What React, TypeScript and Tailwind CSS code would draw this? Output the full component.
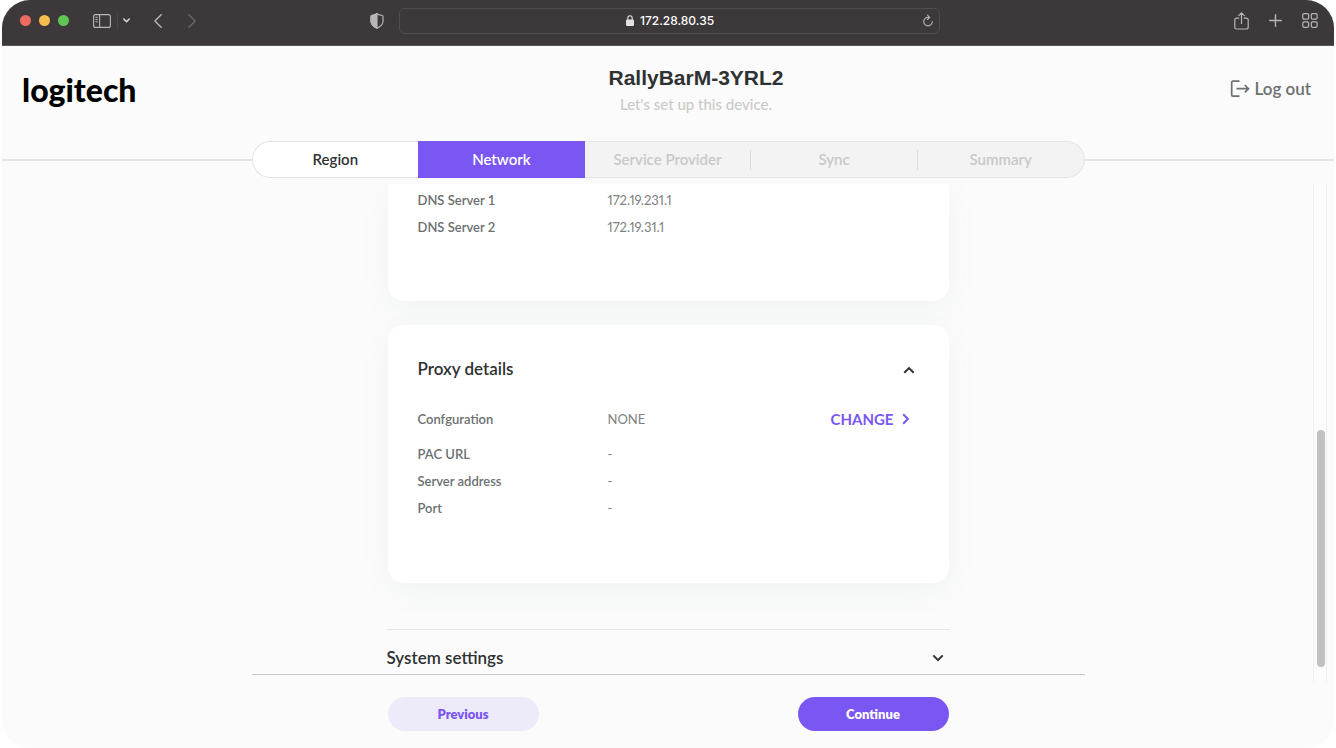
import { useState } from "react";

const steps = ["Region", "Network", "Service Provider", "Sync", "Summary"];
const currentStep = 1;

const dnsRows = [
  { label: "DNS Server 1", value: "172.19.231.1" },
  { label: "DNS Server 2", value: "172.19.31.1" },
];

const proxyRows = [
  { label: "PAC URL", value: "-" },
  { label: "Server address", value: "-" },
  { label: "Port", value: "-" },
];

type ChevronProps = { direction: "up" | "down" | "right"; className?: string };

function Chevron({ direction, className }: ChevronProps) {
  const paths = {
    up: "M1.3 9.8 6 5.1l4.7 4.7",
    down: "M1.3 3.4 6 8.1l4.7-4.7",
    right: "M3.2 1.3 7.9 6l-4.7 4.7",
  };
  return (
    <svg viewBox="0 0 12 12" width="12" height="12" fill="none" stroke="currentColor" strokeWidth="2" className={className} aria-hidden="true">
      <path d={paths[direction]} />
    </svg>
  );
}

function BrowserBar() {
  return (
    <div className="flex h-[46px] shrink-0 items-center border-b border-[#5c5859] bg-[#3d3839] pb-1 text-[#b9b6b7]">
      <div className="flex flex-1 items-center pl-[18px]">
        <div className="flex gap-2">
          <span className="size-[11px] rounded-full bg-[#ed6a5e]" />
          <span className="size-[11px] rounded-full bg-[#f4bf4f]" />
          <span className="size-[11px] rounded-full bg-[#61c554]" />
        </div>
        <button type="button" aria-label="Toggle sidebar" className="ml-6">
          <svg width="18" height="14" viewBox="0 0 18 14" fill="none" stroke="currentColor" strokeWidth="1.1" className="block">
            <rect x="0.6" y="0.6" width="16.8" height="12.8" rx="2" />
            <path d="M6.6 .6v12.8M2.4 3.3h2.3M2.4 5.5h2.3M2.4 7.7h2.3" />
          </svg>
        </button>
        <span className="ml-1.5 h-4 w-px bg-[#4b4647]" />
        <button type="button" aria-label="Tab groups" className="ml-[5px] text-[#dddbdc]">
          <svg width="7" height="5" viewBox="0 0 7 5" fill="none" stroke="currentColor" strokeWidth="1.5" strokeLinecap="round" strokeLinejoin="round" className="block">
            <path d="M.8 1 3.5 3.8 6.2 1" />
          </svg>
        </button>
        <button type="button" aria-label="Back" className="ml-6">
          <svg width="8" height="14" viewBox="0 0 8 14" fill="none" stroke="currentColor" strokeWidth="1.4" strokeLinecap="round" strokeLinejoin="round" className="block">
            <path d="M7.2.8.9 7l6.3 6.2" />
          </svg>
        </button>
        <button type="button" aria-label="Forward" className="ml-[26px] text-[#6a6667]">
          <svg width="8" height="14" viewBox="0 0 8 14" fill="none" stroke="currentColor" strokeWidth="1.4" strokeLinecap="round" strokeLinejoin="round" className="block">
            <path d="M.8.8 7.1 7 .8 13.2" />
          </svg>
        </button>
        <span className="flex-1" />
        <svg width="14" height="16" viewBox="0 0 14 16" fill="none" stroke="currentColor" strokeWidth="1.2" className="mr-[15px]" aria-hidden="true">
          <path d="M7 .8c1.6 1 3.4 1.5 5.2 1.7.5.1.8.4.8.9v4.8c0 3.2-2.4 5.4-6 7-3.6-1.6-6-3.8-6-7V3.4c0-.5.3-.8.8-.9C3.6 2.3 5.4 1.8 7 .8Z" />
          <path d="M7 .8v14.4c-3.6-1.6-6-3.8-6-7V3.4c0-.5.3-.8.8-.9C3.6 2.3 5.4 1.8 7 .8Z" fill="currentColor" />
        </svg>
      </div>
      <div className="flex h-[26px] w-[541px] items-center rounded-md border border-[#514d4e] px-1.5">
        <div className="flex flex-1 items-center justify-center gap-1.5 pl-3 text-[#e4e2e3]">
          <svg width="8" height="11" viewBox="0 0 8 11" aria-hidden="true">
            <rect y="4.6" width="8" height="6.4" rx="1.2" fill="currentColor" />
            <path d="M1.8 5V3a2.2 2.2 0 0 1 4.4 0v2" fill="none" stroke="currentColor" strokeWidth="1.1" />
          </svg>
          <span className="font-[Inter,sans-serif] text-xs leading-4 font-medium text-white">172.28.80.35</span>
        </div>
        <button type="button" aria-label="Reload">
          <svg width="10" height="13" viewBox="0 0 10 13" fill="none" stroke="currentColor" strokeWidth="1.1" strokeLinecap="round" strokeLinejoin="round" className="block">
            <path d="M9.3 7.6A4.3 4.3 0 1 1 5 3.3h1.3M4.5 1.1l2.2 2.2-2.2 2.2" />
          </svg>
        </button>
      </div>
      <div className="flex flex-1 items-center justify-end gap-5 pr-4">
        <button type="button" aria-label="Share">
          <svg width="15" height="18" viewBox="0 0 15 18" fill="none" stroke="currentColor" strokeWidth="1.2" strokeLinecap="round" strokeLinejoin="round" className="block">
            <path d="M4.8 6.1H2.6A1.8 1.8 0 0 0 .8 7.9v7.3A1.8 1.8 0 0 0 2.6 17h9.8a1.8 1.8 0 0 0 1.8-1.8V7.9a1.8 1.8 0 0 0-1.8-1.8h-2.2M7.5 11.5V1M4.7 3.7 7.5.9l2.8 2.8" />
          </svg>
        </button>
        <button type="button" aria-label="New tab">
          <svg width="13" height="13" viewBox="0 0 13 13" stroke="currentColor" strokeWidth="1.4" strokeLinecap="round" className="block">
            <path d="M6.5.7v11.6M.7 6.5h11.6" />
          </svg>
        </button>
        <button type="button" aria-label="Tab overview">
          <svg width="16" height="15" viewBox="0 0 16 15" fill="none" stroke="currentColor" strokeWidth="1.2" className="block">
            <rect x=".8" y=".7" width="5.8" height="5.4" rx="1.2" />
            <rect x="9.3" y=".7" width="5.8" height="5.4" rx="1.2" />
            <rect x=".8" y="8.9" width="5.8" height="5.4" rx="1.2" />
            <rect x="9.3" y="8.9" width="5.8" height="5.4" rx="1.2" />
          </svg>
        </button>
      </div>
    </div>
  );
}

function PageHeader() {
  return (
    <header className="grid h-[95px] shrink-0 grid-cols-[1fr_auto_1fr] px-5">
      <div className="pt-5 text-[32px] leading-[48px] font-black text-black">logitech</div>
      <div className="pt-5 pl-14 text-center">
        <h1 className="font-['Liberation_Sans',sans-serif] text-[21px] leading-6 font-bold text-[#2f3132]">RallyBarM-3YRL2</h1>
        <p className="pt-1 text-[15px] leading-5 font-medium text-[#c8caca]">Let's set up this device.</p>
      </div>
      <div className="flex items-start justify-end pt-[31px] pr-[3px]">
        <a href="#logout" className="flex items-center gap-1 text-[17px] leading-6 font-semibold text-[#6b7071]">
          <svg width="20" height="18" viewBox="0 0 20 18" fill="none" stroke="currentColor" strokeWidth="1.7" aria-hidden="true">
            <path d="M9.5 1.2H3A1.3 1.3 0 0 0 1.7 2.5v12.4A1.3 1.3 0 0 0 3 16.2h6.5M6.5 8.7h12M14.8 5l3.7 3.7-3.7 3.7" />
          </svg>
          Log out
        </a>
      </div>
    </header>
  );
}

function Steps() {
  return (
    <div className="flex shrink-0 items-center">
      <span className="h-0.5 flex-1 bg-[#e3e4e4]" />
      <nav aria-label="Setup steps" className="grid h-[37px] w-[833px] grid-cols-5 text-[15px] font-semibold">
        {steps.map((step, i) => {
          const done = i < currentStep;
          const active = i === currentStep;
          const look = active
            ? "bg-[#7a56f2] text-white"
            : done
              ? "rounded-l-full border-y border-l border-[#e1e3e3] bg-white text-[#2f3132]"
              : "border-y border-[#e4e5e5] bg-[#f3f3f3] text-[#c6c9c9]";
          const end = i === steps.length - 1 ? "rounded-r-full border-r" : "";
          return (
            <button
              key={step}
              type="button"
              disabled={i > currentStep}
              aria-current={active ? "step" : undefined}
              className={`flex items-center ${look} ${end}`}
            >
              <span className="flex-1 pb-0.5 text-center leading-5">{step}</span>
              {i > currentStep && i < steps.length - 1 && <span className="h-5 w-px bg-[#dcdddd]" />}
            </button>
          );
        })}
      </nav>
      <span className="h-0.5 flex-1 bg-[#e3e4e4]" />
    </div>
  );
}

function DetailRow({ label, value }: { label: string; value: string }) {
  return (
    <div className="flex h-[27px] items-center">
      <dt className="w-[190px] font-semibold text-[#6b7071]">{label}</dt>
      <dd className="text-[#7d8283] proportional-nums">{value}</dd>
    </div>
  );
}

export default function App() {
  const [proxyOpen, setProxyOpen] = useState(true);

  return (
    <div className="h-screen bg-white px-0.5 font-[Lato,sans-serif]">
      <div className="flex h-full flex-col overflow-hidden rounded-[28px] bg-[#fbfbfb]">
        <BrowserBar />
        <PageHeader />
        <Steps />
        <div className="grid min-h-0 flex-1 grid-cols-[1fr_833px_1fr] pt-1.5">
          <div className="col-start-2 flex min-h-0 flex-col">
            <main className="flex min-h-0 flex-1 flex-col overflow-hidden border-b border-[#c9cbcb] px-[135px] text-[13px] leading-5">
              <section className="mx-px h-[117px] shrink-0 rounded-b-2xl bg-white px-[30px] pt-0.5 shadow-[0_8px_32px_rgba(60,100,90,0.05)]">
                <dl>
                  {dnsRows.map((row) => (
                    <DetailRow key={row.label} {...row} />
                  ))}
                </dl>
              </section>
              <section className="mx-px mt-6 min-h-[258px] shrink-0 rounded-2xl bg-white px-[30px] pt-8 shadow-[0_8px_32px_rgba(60,100,90,0.05)]">
                <h2>
                  <button
                    type="button"
                    aria-expanded={proxyOpen}
                    onClick={() => setProxyOpen(!proxyOpen)}
                    className="flex w-full items-center justify-between pr-1 text-[17px] leading-6 font-semibold text-[#2f3132]"
                  >
                    Proxy details
                    <Chevron direction={proxyOpen ? "up" : "down"} />
                  </button>
                </h2>
                {proxyOpen && (
                  <dl className="pt-6">
                    <div className="mb-2 flex items-center">
                      <div className="flex-1">
                        <DetailRow label="Confguration" value="NONE" />
                      </div>
                      <button type="button" className="mr-[7px] flex items-center gap-1.5 text-[15px] font-bold text-[#7a56f2]">
                        CHANGE
                        <Chevron direction="right" />
                      </button>
                    </div>
                    {proxyRows.map((row) => (
                      <DetailRow key={row.label} {...row} />
                    ))}
                  </dl>
                )}
              </section>
              <section className="mt-[46px] shrink-0 border-t border-[#e4e5e5] pt-4">
                <h2>
                  <button type="button" aria-expanded="false" className="flex w-full items-center justify-between pr-1.5 text-[17px] leading-6 font-semibold text-[#2f3132]">
                    System settings
                    <Chevron direction="down" />
                  </button>
                </h2>
              </section>
            </main>
            <footer className="flex shrink-0 justify-between px-[136px] pt-[22px] pb-[17px] text-[13px] leading-5 font-extrabold">
              <button type="button" className="h-[34px] w-[151px] rounded-full bg-[#edeafa] text-[#7a56f2]">Previous</button>
              <button type="button" className="h-[34px] w-[151px] rounded-full bg-[#7a56f2] text-white">Continue</button>
            </footer>
          </div>
          <div className="flex justify-end pr-[7px] pb-[65px]">
            <div className="flex w-[14px] flex-col justify-end border-x border-[#f0f0f0] pb-4 pl-[3px]">
              <span className="h-[49%] w-2 rounded-full bg-[#c1c1c1]" />
            </div>
          </div>
        </div>
      </div>
    </div>
  );
}
